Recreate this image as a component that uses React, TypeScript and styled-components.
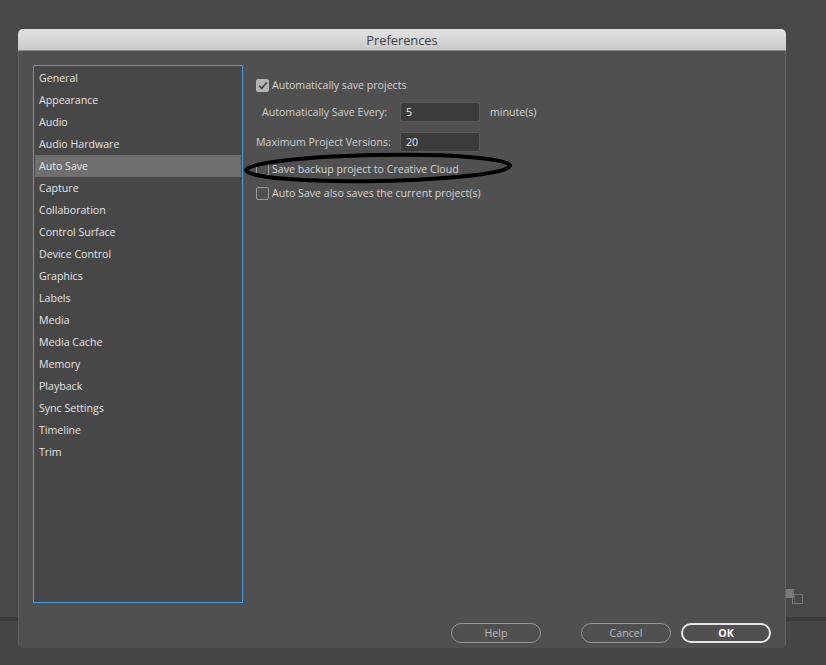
import React from "react"
import styled, { createGlobalStyle } from "styled-components"

const GlobalStyle = createGlobalStyle`
  html, body {
    margin: 0;
    padding: 0;
  }
  body {
    width: 826px;
    height: 665px;
    overflow: hidden;
    background:
      linear-gradient(
        to bottom,
        #484848 0,
        #484848 617px,
        #3a3a3a 617px,
        #3a3a3a 621px,
        #454545 621px
      );
    font-family: "Open Sans", "Noto Sans", sans-serif;
  }
`

const Screen = styled.div`
  position: relative;
  width: 826px;
  height: 665px;
  padding: 29px 0 0 18px;
  box-sizing: border-box;
`

const Dialog = styled.div`
  width: 768px;
  height: 619px;
  display: flex;
  flex-direction: column;
  border-radius: 5px;
  background-color: #505050;
  overflow: hidden;
  box-sizing: border-box;
`

const TitleBar = styled.div`
  height: 21px;
  flex-shrink: 0;
  display: flex;
  align-items: center;
  justify-content: center;
  background: linear-gradient(to bottom, #e3e3e3, #c9c9c9);
  border-bottom: 1px solid #8c8c8c;
  color: #404040;
  font-size: 12.8px;
`

const Body = styled.div`
  position: relative;
  flex: 1;
  display: flex;
  flex-direction: column;
  padding: 14px 14px 5px 14px;
  border-left: 1px solid #626262;
  border-right: 1px solid #626262;
  border-bottom: 1px solid #626262;
  border-radius: 0 0 5px 5px;
  box-sizing: border-box;
`

const Main = styled.div`
  display: flex;
  gap: 13px;
  height: 538px;
`

const Sidebar = styled.ul`
  list-style: none;
  margin: 0;
  padding: 1px;
  width: 210px;
  box-sizing: border-box;
  border: 1px solid #4a9de3;
  background-color: #474747;
`

const SidebarItem = styled.li<{ $active?: boolean }>`
  height: 22px;
  display: flex;
  align-items: center;
  padding-left: 4px;
  color: #e4e4e4;
  font-size: 10.6px;
  background-color: ${(p) => (p.$active ? "#6f6f6f" : "transparent")};
`

const Panel = styled.div`
  position: relative;
  flex: 1;
  display: flex;
  flex-direction: column;
  gap: 10px;
  padding-top: 13px;
`

const CheckRow = styled.label`
  height: 14px;
  display: flex;
  align-items: center;
  gap: 3px;
  color: #d4d4d4;
  font-size: 10.6px;
  white-space: nowrap;
`

const Box = styled.span<{ $checked?: boolean }>`
  width: 13px;
  height: 13px;
  box-sizing: border-box;
  border-radius: 2px;
  border: 1px solid ${(p) => (p.$checked ? "#b3b3b3" : "#9a9a9a")};
  background-color: ${(p) => (p.$checked ? "#b3b3b3" : "transparent")};
  display: flex;
  align-items: center;
  justify-content: center;
`

const FieldRow = styled.div`
  height: 20px;
  display: flex;
  align-items: center;
`

const FieldLabel = styled.span<{ $indent?: number }>`
  width: 134px;
  flex-shrink: 0;
  padding-left: ${(p) => p.$indent || 0}px;
  box-sizing: border-box;
  margin-right: 10px;
  color: #cfcfcf;
  font-size: 10.6px;
  white-space: nowrap;
`

const Input = styled.div`
  width: 80px;
  height: 20px;
  box-sizing: border-box;
  padding-left: 5px;
  display: flex;
  align-items: center;
  background-color: #3b3b3b;
  border: 1px solid #5a5a5a;
  border-radius: 2px;
  color: #f0f0f0;
  font-size: 10.6px;
`

const Unit = styled.span`
  margin-left: 10px;
  color: #d4d4d4;
  font-size: 10.6px;
`

const Annotation = styled.svg`
  position: absolute;
  left: -13px;
  top: 87px;
  width: 274px;
  height: 32px;
  overflow: visible;
`

const Footer = styled.div`
  margin-top: 20px;
  height: 20px;
  display: flex;
  justify-content: flex-end;
  gap: 10px;
`

const Button = styled.button<{ $primary?: boolean }>`
  width: 90px;
  height: 20px;
  padding: 0;
  box-sizing: border-box;
  border-radius: 10px;
  background: transparent;
  border: ${(p) => (p.$primary ? "2px solid #e6e6e6" : "1.5px solid #959595")};
  color: ${(p) => (p.$primary ? "#ffffff" : "#bdbdbd")};
  font-family: "Open Sans", "Noto Sans", sans-serif;
  font-size: 10.6px;
  font-weight: ${(p) => (p.$primary ? 700 : 400)};
  &:first-child {
    margin-right: 30px;
  }
`

const NestIcon = styled.svg`
  position: absolute;
  left: 785px;
  top: 588px;
  width: 18px;
  height: 16px;
`

const Check = () => (
  <svg width="10" height="9" viewBox="0 0 10 9">
    <path d="M1.2 4.6 L3.8 7.4 L8.8 1.2" fill="none" stroke="#4a4a4a" strokeWidth="1.8" />
  </svg>
)

const items = [
  "General",
  "Appearance",
  "Audio",
  "Audio Hardware",
  "Auto Save",
  "Capture",
  "Collaboration",
  "Control Surface",
  "Device Control",
  "Graphics",
  "Labels",
  "Media",
  "Media Cache",
  "Memory",
  "Playback",
  "Sync Settings",
  "Timeline",
  "Trim",
]

const App = () => {
  return (
    <Screen>
      <GlobalStyle />
      <NestIcon viewBox="0 0 18 16">
        <rect x="0" y="1" width="9" height="9" fill="#7a7a7a" />
        <rect x="7.5" y="2" width="1" height="1" fill="#4a4a4a" />
        <rect x="7.5" y="4.5" width="1" height="1" fill="#4a4a4a" />
        <rect x="7.5" y="7" width="1" height="1" fill="#4a4a4a" />
        <rect x="7.5" y="6.5" width="10" height="9" fill="none" stroke="#7a7a7a" strokeWidth="1" />
        <rect x="9" y="8" width="1" height="1" fill="#7a7a7a" />
        <rect x="9" y="10.5" width="1" height="1" fill="#7a7a7a" />
        <rect x="9" y="13" width="1" height="1" fill="#7a7a7a" />
      </NestIcon>
      <Dialog>
        <TitleBar>Preferences</TitleBar>
        <Body>
          <Main>
            <Sidebar>
              {items.map((item) => (
                <SidebarItem key={item} $active={item === "Auto Save"}>
                  {item}
                </SidebarItem>
              ))}
            </Sidebar>
            <Panel>
              <CheckRow>
                <Box $checked>
                  <Check />
                </Box>
                Automatically save projects
              </CheckRow>
              <FieldRow>
                <FieldLabel $indent={6}>Automatically Save Every:</FieldLabel>
                <Input>5</Input>
                <Unit>minute(s)</Unit>
              </FieldRow>
              <FieldRow>
                <FieldLabel>Maximum Project Versions:</FieldLabel>
                <Input>20</Input>
              </FieldRow>
              <CheckRow>
                <Box />
                Save backup project to Creative Cloud
              </CheckRow>
              <CheckRow>
                <Box />
                Auto Save also saves the current project(s)
              </CheckRow>
              <Annotation viewBox="0 0 274 32">
                <ellipse
                  cx="135"
                  cy="16"
                  rx="132"
                  ry="13"
                  fill="none"
                  stroke="#000"
                  strokeWidth="4"
                  transform="rotate(-1 135 16)"
                />
              </Annotation>
            </Panel>
          </Main>
          <Footer>
            <Button>Help</Button>
            <Button>Cancel</Button>
            <Button $primary>OK</Button>
          </Footer>
        </Body>
      </Dialog>
    </Screen>
  )
}

export default App
